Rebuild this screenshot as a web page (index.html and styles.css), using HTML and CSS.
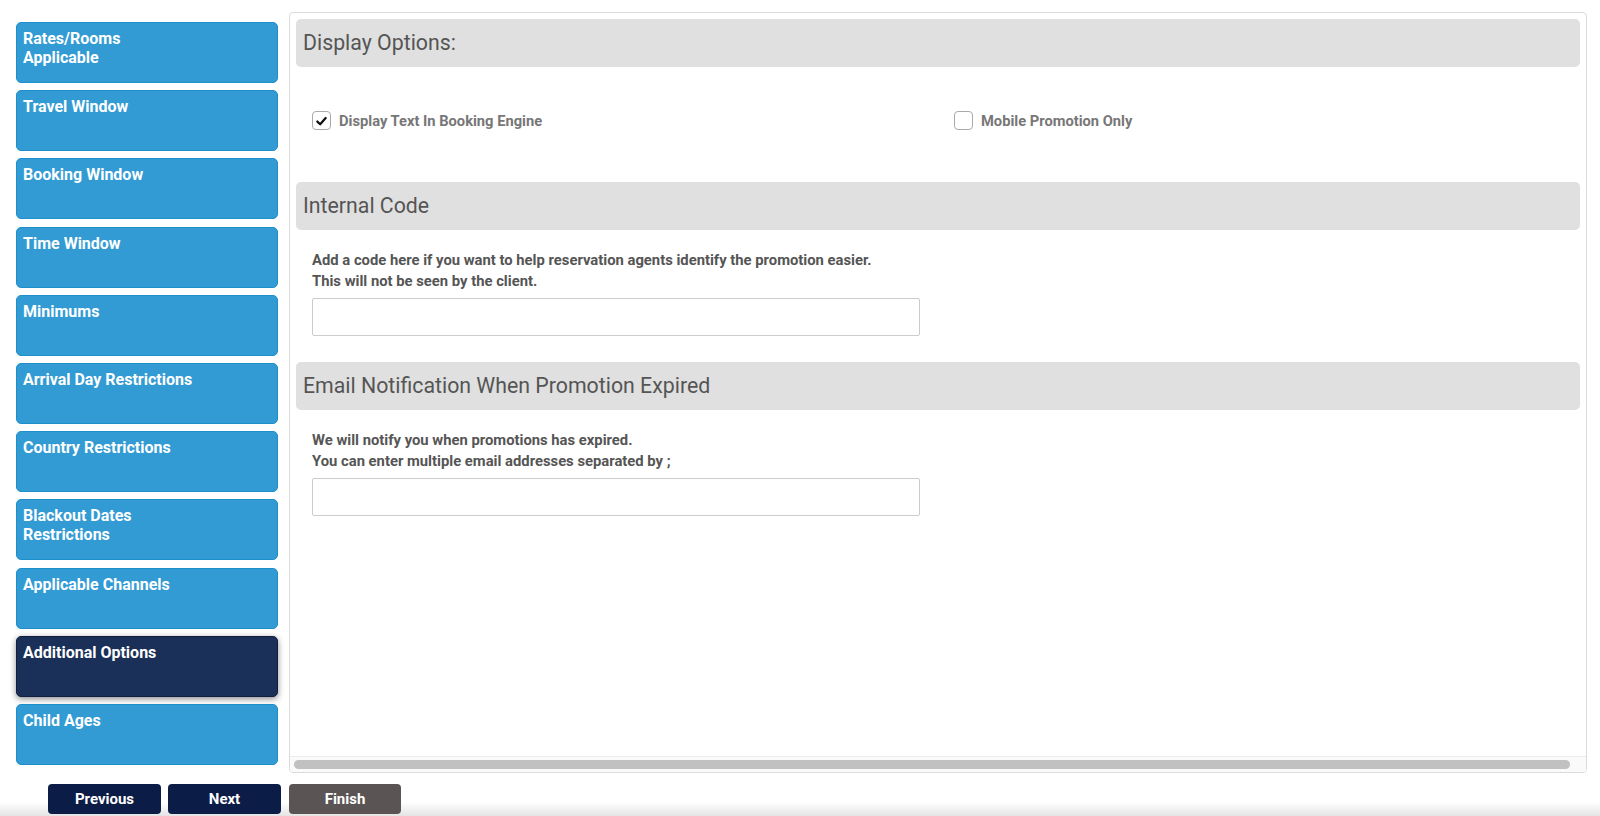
FILE: index.html
```html
<!DOCTYPE html>
<html>
<head>
<meta charset="utf-8">
<link rel="stylesheet" href="styles.css">
</head>
<body>
<div class="layout">
  <nav class="sidebar">
    <div class="nav-item">Rates/Rooms<br>Applicable</div>
    <div class="nav-item">Travel Window</div>
    <div class="nav-item">Booking Window</div>
    <div class="nav-item">Time Window</div>
    <div class="nav-item">Minimums</div>
    <div class="nav-item">Arrival Day Restrictions</div>
    <div class="nav-item">Country Restrictions</div>
    <div class="nav-item">Blackout Dates<br>Restrictions</div>
    <div class="nav-item">Applicable Channels</div>
    <div class="nav-item active">Additional Options</div>
    <div class="nav-item">Child Ages</div>
  </nav>
  <main class="panel">
    <div class="panel-content">
      <div class="section-header">Display Options:</div>
      <div class="options">
        <label class="option">
          <span class="checkbox checked">
            <svg viewBox="0 0 18 18" width="18" height="18"><path d="M4.6 9.6 L7.6 12.4 L13.4 5.9" fill="none" stroke="#111" stroke-width="2.4" stroke-linecap="round" stroke-linejoin="round"/></svg>
          </span>
          <span>Display Text In Booking Engine</span>
        </label>
        <label class="option">
          <span class="checkbox"></span>
          <span>Mobile Promotion Only</span>
        </label>
      </div>
      <div class="section-header">Internal Code</div>
      <div class="field">
        <p class="help">Add a code here if you want to help reservation agents identify the promotion easier.<br>This will not be seen by the client.</p>
        <div class="input"></div>
      </div>
      <div class="section-header">Email Notification When Promotion Expired</div>
      <div class="field">
        <p class="help">We will notify you when promotions has expired.<br>You can enter multiple email addresses separated by ;</p>
        <div class="input"></div>
      </div>
    </div>
    <div class="hscroll"><div class="thumb"></div></div>
  </main>
</div>
<div class="buttons">
  <button class="btn navy">Previous</button>
  <button class="btn navy">Next</button>
  <button class="btn grey">Finish</button>
</div>
<div class="bottom-fade"></div>
</body>
</html>
```
FILE: styles.css
```css
html, body {
  margin: 0;
  padding: 0;
  background: #fff;
  font-family: Roboto, "Liberation Sans", Arial, sans-serif;
  height: 816px;
  overflow: hidden;
  position: relative;
}

.layout {
  display: flex;
  align-items: flex-start;
  padding: 12px 0 0 16px;
  gap: 11px;
}

.sidebar {
  width: 262px;
  margin-top: 10px;
  display: flex;
  flex-direction: column;
  gap: 7.2px;
}

.nav-item {
  box-sizing: border-box;
  height: 61px;
  background: #329bd4;
  border: 1px solid #1f8fcc;
  border-radius: 5px;
  color: #fff;
  font-weight: 700;
  font-size: 16px;
  line-height: 18.5px;
  padding: 7px 7px 5px 6px;
}

.nav-item.active {
  background: #1b3058;
  border-color: #101f40;
  box-shadow: 0 2px 6px rgba(0, 0, 0, 0.45);
}

.panel {
  box-sizing: border-box;
  width: 1298px;
  height: 761px;
  border: 1px solid #dcdcdc;
  border-radius: 4px;
  display: flex;
  flex-direction: column;
  overflow: hidden;
}

.panel-content {
  flex: 1;
  padding: 6px 6px 0 6px;
}

.section-header {
  height: 48px;
  background: #e0e0e0;
  border-radius: 5px;
  color: #555;
  font-size: 21.3px;
  line-height: 48px;
  padding-left: 7px;
}

.options {
  display: grid;
  grid-template-columns: 1fr 1fr;
  padding: 44px 0 52px;
}

.option {
  display: flex;
  align-items: center;
  gap: 8px;
  padding-left: 16px;
  color: #777;
  font-size: 14.7px;
  font-weight: 700;
  height: 19px;
}

.checkbox {
  box-sizing: border-box;
  width: 19px;
  height: 19px;
  border: 1px solid #aaa;
  border-radius: 4px;
  display: flex;
  align-items: center;
  justify-content: center;
  background: #fff;
}

.checkbox svg {
  display: block;
}

.field {
  padding: 20px 16px 26px;
}

.help {
  margin: 0;
  color: #555;
  font-size: 14.8px;
  font-weight: 700;
  line-height: 21px;
}

.input {
  box-sizing: border-box;
  width: 608px;
  height: 38px;
  margin-top: 6px;
  border: 1px solid #ccc;
  border-radius: 2px;
  background: #fff;
}

.hscroll {
  height: 16px;
  box-sizing: border-box;
  background: #fafafa;
  border-top: 1px solid #ececec;
  padding: 3px 16px 0 4px;
}

.thumb {
  height: 9px;
  background: #c1c1c1;
  border-radius: 5px;
}

.buttons {
  display: flex;
  gap: 7px;
  padding: 11px 0 0 48px;
  position: relative;
  z-index: 2;
}

.btn {
  box-sizing: border-box;
  width: 113px;
  height: 30px;
  border: 0;
  border-radius: 4px;
  color: #fff;
  font-family: Roboto, "Liberation Sans", Arial, sans-serif;
  font-size: 15px;
  font-weight: 700;
  padding: 0;
}

.btn.navy {
  background: #0b1c47;
}

.btn.grey {
  background: #5a5554;
  width: 112px;
  margin-left: 1px;
}

.bottom-fade {
  position: absolute;
  left: 0;
  right: 0;
  bottom: 0;
  height: 14px;
  z-index: 1;
  background: linear-gradient(to bottom, rgba(230, 230, 230, 0), rgba(225, 225, 225, 0.9));
  pointer-events: none;
}
```
